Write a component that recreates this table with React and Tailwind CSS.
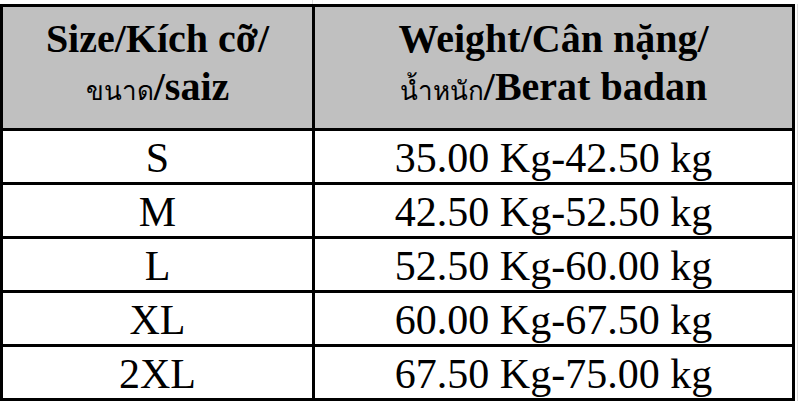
import React from 'react';

const rows = [
  ['S', '35.00 Kg-42.50 kg'],
  ['M', '42.50 Kg-52.50 kg'],
  ['L', '52.50 Kg-60.00 kg'],
  ['XL', '60.00 Kg-67.50 kg'],
  ['2XL', '67.50 Kg-75.00 kg'],
];

const serif = { fontFamily: '"Liberation Serif", "Times New Roman", serif' };

export default function App() {
  return (
    <div className="w-[800px] h-[405px] bg-white overflow-hidden text-black" style={serif}>
      {/* faint sheet gridline above the table */}
      <div className="h-1 w-[313px] border-r border-[#dcdcdc]" />
      <div className="flex">
        <div className="w-[795px] border-[3px] border-black bg-black grid grid-cols-[309px_477px] gap-[3px]">
          <div className="bg-[#c0c0c0] h-[121px] flex flex-col items-center justify-center pb-1 font-bold text-[40px] leading-[48px]">
            <div>Size/Kích cỡ/</div>
            <div>
              <span className="text-[26px] font-normal">ขนาด</span>/saiz
            </div>
          </div>
          <div className="bg-[#c0c0c0] h-[121px] flex flex-col items-center justify-center pb-1 font-bold text-[40px] leading-[48px]">
            <div>Weight/Cân nặng/</div>
            <div>
              <span className="text-[26px] font-normal">น้ำหนัก</span>/Berat badan
            </div>
          </div>
          {rows.map(([size, weight]) => (
            <React.Fragment key={size}>
              <div className="bg-white h-[51px] text-[42px] leading-[51px] pt-0.5 text-center">{size}</div>
              <div className="bg-white h-[51px] text-[42px] leading-[51px] pt-0.5 text-center">{weight}</div>
            </React.Fragment>
          ))}
        </div>
        <div className="w-[2px]" />
        <div className="w-px bg-[#dcdcdc]" />
      </div>
    </div>
  );
}
